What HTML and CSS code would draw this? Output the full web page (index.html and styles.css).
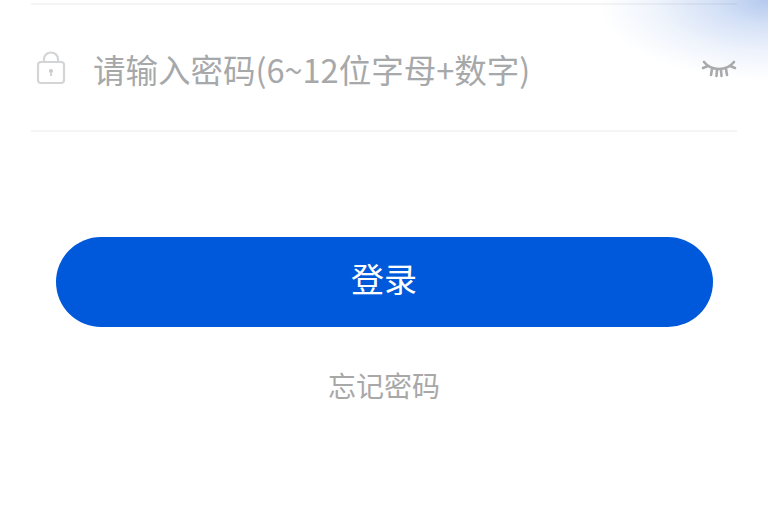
FILE: index.html
```html
<!DOCTYPE html>
<html lang="zh-CN">
<head>
    <meta charset="UTF-8">
    <meta name="viewport" content="width=device-width, initial-scale=1.0">
    <title>登录</title>
    <link rel="stylesheet" href="styles.css">
</head>
<body>
    <div class="page">
        <div class="glow"></div>
        <div class="field">
            <svg class="lock" width="30" height="34" viewBox="0 0 30 34" fill="none" stroke="#d4d5d7" stroke-width="2.2">
                <rect x="2" y="11" width="26" height="21" rx="3"/>
                <path d="M8 11V8a7 6.5 0 0 1 14 0v3"/>
                <circle cx="15" cy="20" r="2" fill="#c8c9cb" stroke="none"/>
                <path d="M15 21v4"/>
            </svg>
            <span class="placeholder">请输入密码(6~12位字母+数字)</span>
            <svg class="eye" width="36" height="18" viewBox="0 0 36 18" fill="none" stroke="#a8aaac" stroke-width="2.6" stroke-linecap="round">
                <path d="M3 2c4 5 9 7 15 7s11-2 15-7"/>
                <path d="M2 8l5-2M29 6l5 2M11 9l-1 6M25 9l1 6M16 10l-.5 6M20 10l.5 6"/>
            </svg>
        </div>
        <button class="login-btn"><span class="login-text">登录</span></button>
        <a class="forgot">忘记密码</a>
    </div>
</body>
</html>
```

FILE: styles.css
```css
*{
    margin: 0;
    padding: 0;
    box-sizing: border-box;
}
body{
    background-color: #fff;
    font-family: "Noto Sans CJK SC", "Liberation Sans", sans-serif;
}
.page{
    position: relative;
    height: 510px;
    overflow: hidden;
    display: flex;
    flex-direction: column;
    align-items: center;
}
.glow{
    position: absolute;
    top: 0;
    right: 0;
    width: 170px;
    height: 80px;
    background: radial-gradient(ellipse farthest-side at 100% 0, #b4c9ee 0%, #d3e0f6 30%, #eef3fc 65%, #fff 100%);
}
.field{
    position: relative;
    width: 706px;
    height: 129px;
    margin-top: 3px;
    border-top: 2px solid rgba(0, 0, 0, 0.04);
    border-bottom: 2px solid #f5f5f5;
    display: flex;
    align-items: center;
    padding: 0 0 2px 5px;
}
.lock{
    margin-top: 3px;
    margin-right: 27px;
}
.placeholder{
    flex: 1;
    font-size: 32.5px;
    line-height: 40px;
    margin-top: 5px;
    color: #a6a8aa;
    white-space: nowrap;
}
.eye{
    margin-top: 4px;
}
.login-btn{
    width: 657px;
    height: 90px;
    margin-top: 105px;
    border: none;
    border-radius: 45px;
    background-color: #0058da;
    color: #fff;
    font-family: inherit;
    font-size: 33px;
}
.login-text{
    display: block;
    margin-top: -9px;
}
.forgot{
    margin-top: 38px;
    font-size: 28px;
    color: #a8a8a8;
}
```
